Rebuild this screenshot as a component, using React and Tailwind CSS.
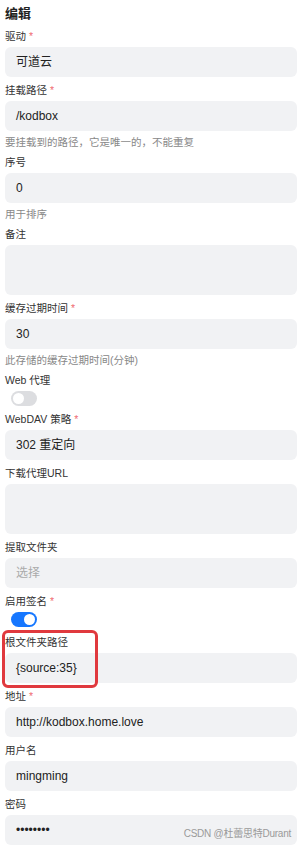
const font = { fontFamily: '"Liberation Sans", Arial, "Noto Sans CJK SC", sans-serif' }

function Label({ text, required }) {
  return (
    <div className="h-[14px] text-[10.5px] leading-[14px] text-[#333]">
      {text}
      {required && <span className="ml-[3px] text-[#ef6b72]">*</span>}
    </div>
  )
}

function Input({ value, placeholder, tall }) {
  return (
    <div className={`mt-[4px] flex w-full rounded-md bg-[#f1f2f4] px-[11px] text-[12px] ${tall ? 'h-[50px]' : 'h-[30px] items-center'}`}>
      {value ? <span className="text-[#222]">{value}</span> : <span className="text-[#aaa]">{placeholder}</span>}
    </div>
  )
}

function Help({ text }) {
  return <div className="mt-[4px] h-[14px] text-[10.5px] leading-[14px] text-[#888]">{text}</div>
}

function Toggle({ on }) {
  return (
    <div className={`ml-[6px] mt-[4px] flex h-[15px] w-[26px] items-center rounded-full px-[2px] ${on ? 'justify-end bg-[#1677ff]' : 'bg-[#dcdde0]'}`}>
      <div className="h-[11px] w-[11px] rounded-full bg-white" />
    </div>
  )
}

function Field({ label, required, value, placeholder, help, tall }) {
  return (
    <div className="mb-[6px] flex flex-col">
      <Label text={label} required={required} />
      <Input value={value} placeholder={placeholder} tall={tall} />
      {help && <Help text={help} />}
    </div>
  )
}

function SwitchField({ label, required, on, gap }) {
  return (
    <div className={`flex flex-col ${gap}`}>
      <Label text={label} required={required} />
      <Toggle on={on} />
    </div>
  )
}

export default function App() {
  return (
    <div className="relative flex h-[845px] w-[297px] flex-col overflow-hidden bg-white pl-[5px] pt-[5px]" style={font}>
      <div className="mb-[6px] h-[18px] text-[13px] font-bold leading-[18px] text-[#222]">编辑</div>

      <Field label="驱动" required value="可道云" />
      <Field label="挂载路径" required value="/kodbox" help="要挂载到的路径，它是唯一的，不能重复" />
      <Field label="序号" value="0" help="用于排序" />
      <Field label="备注" tall />
      <Field label="缓存过期时间" required value="30" help="此存储的缓存过期时间(分钟)" />
      <SwitchField label="Web 代理" gap="mb-[6px]" />
      <Field label="WebDAV 策略" required value="302 重定向" />
      <Field label="下载代理URL" tall />
      <Field label="提取文件夹" placeholder="选择" />
      <SwitchField label="启用签名" required on gap="mb-[8px]" />

      <div className="relative flex flex-col">
        <Field label="根文件夹路径" value="{source:35}" />
        <div className="pointer-events-none absolute left-[-3px] top-[-5px] h-[58px] w-[96px] rounded-md border-[3px] border-[#e0393e]" />
      </div>

      <Field label="地址" required value="http://kodbox.home.love" />
      <Field label="用户名" value="mingming" />
      <Field label="密码" value="••••••••" />

      <div className="absolute right-[6px] top-[826px] text-[10px] tracking-tight text-[#9a9a9a]">CSDN @杜蕾思特Durant</div>
    </div>
  )
}
